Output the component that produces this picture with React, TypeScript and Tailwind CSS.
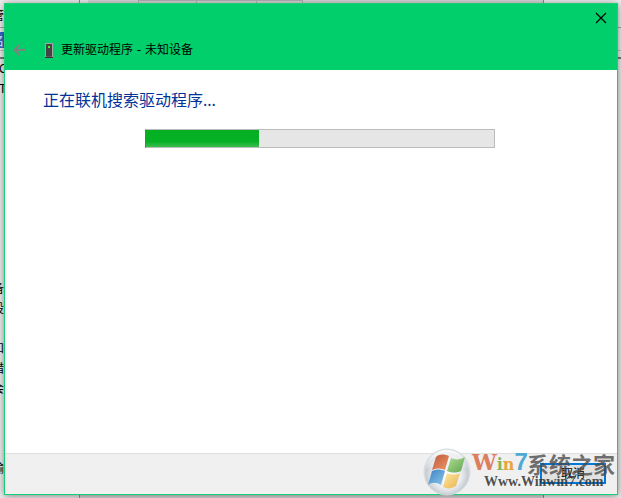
import React from "react";

const sans = "font-['DejaVu_Sans','Noto_Sans_CJK_SC',sans-serif]";

function Desktop() {
  return (
    <div aria-hidden="true" className="absolute inset-0 overflow-hidden bg-[#eeeeee]">
      <div className="absolute inset-y-0 left-[79px] w-[465px] border-x border-[#8f8f8f] bg-[#d9d9d9]" />
      <div className="absolute top-0 left-[80px] h-3 w-2 bg-[#eeeeee]" />
      <div className="absolute top-0 left-[138px] flex h-3 w-[165px] border border-[#b5b5b5]">
        <span className="w-[58px] border-r border-[#b5b5b5]" />
        <span className="w-[60px] border-r border-[#b5b5b5]" />
      </div>
      <div className="absolute inset-x-0 top-[27px] h-px bg-[#a0a0a0]" />
      <div className="absolute inset-x-0 top-[50px] h-px bg-[#c4c4c4]" />
      <div className="absolute inset-x-0 top-[57px] h-[2px] bg-[#777777]" />
      <div className="absolute top-[32px] left-0 h-4 w-4 bg-[#3569c8]" />
      <div className="absolute top-[6px] -left-[8px] w-4 font-['Liberation_Sans','Noto_Sans_CJK_SC',sans-serif] text-[12px] leading-5 text-black">
        <p className="h-[26px]">管</p>
        <p className="h-[27px] text-white">名</p>
        <p className="h-5 pl-[7px]">C</p>
        <p className="h-[200px] pl-[7px]">T</p>
        <p className="h-5">备</p>
        <p className="h-10">设</p>
        <p className="h-5">和</p>
        <p className="h-5">措</p>
        <p className="h-20">会</p>
        <p className="h-5">输</p>
      </div>
    </div>
  );
}

function DeviceIcon() {
  return (
    <svg width="8" height="15" viewBox="0 0 8 15" shapeRendering="crispEdges" aria-hidden="true">
      <rect x="0" y="0" width="8" height="14" fill="#a3a8a5" />
      <rect x="1" y="1" width="6" height="12" fill="#434343" />
      <rect x="3" y="3" width="2" height="2" fill="#39ff20" />
      <rect x="0" y="14" width="8" height="1" fill="#343434" />
      <rect x="1" y="13" width="6" height="1" fill="#5b5b5b" />
    </svg>
  );
}

function FlagGlobe() {
  return (
    <svg width="50" height="48" viewBox="0 0 50 48" aria-hidden="true" className="shrink-0">
      <defs>
        <radialGradient id="globe" cx="50%" cy="55%" r="52%">
          <stop offset="0" stopColor="#ffffff" />
          <stop offset=".6" stopColor="#e9edf0" />
          <stop offset=".88" stopColor="#c6ccd2" />
          <stop offset="1" stopColor="#e4e7ea" />
        </radialGradient>
        <linearGradient id="shine" x2="0" y2="1">
          <stop stopColor="#fff" stopOpacity=".85" />
          <stop offset="1" stopColor="#fff" stopOpacity=".2" />
        </linearGradient>
        <linearGradient id="red" x2="1" y2="1"><stop stopColor="#bd573b" /><stop offset="1" stopColor="#ee9867" /></linearGradient>
        <linearGradient id="green" x2="1" y2="1"><stop stopColor="#b4dc96" /><stop offset="1" stopColor="#5ea650" /></linearGradient>
        <linearGradient id="blue" x2="1" y2="1"><stop stopColor="#3c80c4" /><stop offset="1" stopColor="#8cc8ea" /></linearGradient>
        <linearGradient id="gold" x2="1" y2="1"><stop stopColor="#ffe8a0" /><stop offset="1" stopColor="#e8b350" /></linearGradient>
      </defs>
      <circle cx="25" cy="24" r="23" fill="url(#globe)" stroke="#d5dadd" />
      <path d="M4 20C7 8 16 2 25 2s18 6 20 18C32 17 17 18 4 20Z" fill="url(#shine)" />
      <path d="M14 9c4-3 7-3 13-1l-4 14c-5-2-9-2-13 0Z" fill="url(#red)" />
      <path d="M29 10c5 2 9 2 14-1l-4 14c-5 2-9 2-14 0Z" fill="url(#green)" />
      <path d="M10 23c4-2 8-2 13 0l-4 14c-5-3-9-3-13 0Z" fill="url(#blue)" />
      <path d="M25 25c5 2 9 2 13 0l-4 13c-5 3-9 3-13 1Z" fill="url(#gold)" />
    </svg>
  );
}

function Watermark() {
  return (
    <div className="pointer-events-none absolute right-[2px] bottom-[2px] flex h-12 w-[197px] items-start whitespace-nowrap">
      <FlagGlobe />
      <div className="relative h-12 flex-1 font-['DejaVu_Serif',serif] font-bold">
        <div className="absolute top-[2px] left-0 flex h-6 items-baseline leading-6">
          <span className="text-[22px] text-[#dc7d5e]">W</span>
          <span className="text-[16px] text-[#88b45c]">i</span>
          <span className="text-[16px] text-[#e6a63a]">n</span>
          <span className="font-['Liberation_Sans',sans-serif] text-[24px] text-[#4ea9d5]">7</span>
        </div>
        <span className="absolute top-[3px] left-[55px] font-['Noto_Sans_CJK_SC',sans-serif] text-[22px] leading-6 text-[#4a4a4a]/80">系统之家</span>
        <span className="absolute top-[26px] left-[12px] font-['Liberation_Serif',serif] text-[14px] leading-4 text-[#303030]/85">Www.Winwin7.com</span>
      </div>
    </div>
  );
}

export default function App() {
  return (
    <div className={`relative isolate flex h-screen min-h-60 p-[3px] pl-1 ${sans}`}>
      <Desktop />
      <main className="relative flex min-w-0 flex-1 flex-col border border-[#16cf76] bg-white shadow-[0_1px_8px_rgba(0,0,0,0.45)]">
        <header className="flex h-[66px] shrink-0 flex-col bg-[#00cf6b]">
          <div className="flex h-7 items-center justify-end pr-2">
            <button type="button" aria-label="关闭" className="flex size-4 items-center justify-center">
              <svg width="12" height="12" viewBox="0 0 12 12" stroke="#000000" strokeWidth="1.2" aria-hidden="true">
                <path d="M1 1l10 10M11 1L1 11" />
              </svg>
            </button>
          </div>
          <div className="flex h-9 items-center pl-2">
            <button type="button" aria-label="返回" disabled className="w-8">
              <svg width="13" height="12" viewBox="0 0 13 12" fill="none" stroke="#7c837f" strokeWidth="2" aria-hidden="true">
                <path d="M12.5 6H1.5M6.5 1l-5 5 5 5" />
              </svg>
            </button>
            <DeviceIcon />
            <h1 className="pl-2 text-[12px] leading-4 text-black">更新驱动程序 - 未知设备</h1>
          </div>
        </header>
        <section className="flex flex-1 flex-col pt-5 pr-5 pl-[38px]">
          <h2 className="font-['Noto_Sans','Noto_Sans_CJK_SC',sans-serif] text-[16px] leading-5 text-[#003399]">正在联机搜索驱动程序...</h2>
          <div role="progressbar" aria-label="搜索进度" className="mx-auto mt-[19px] h-[19px] w-full max-w-[350px] border border-[#bcbcbc] border-l-[#06b025] bg-[#e6e6e6]">
            <div className="h-full w-[113px] bg-linear-to-b from-[#06b025] from-70% to-[#36be4f]" />
          </div>
        </section>
        <footer className="flex h-[41px] shrink-0 items-start justify-end border-t border-[#dfdfdf] bg-[#f0f0f0] pt-[9px] pr-[11px]">
          <button type="button" className="h-[21px] w-[66px] border-2 border-[#0078d7] bg-[#e1e1e1] text-[12px] leading-4 text-black">取消</button>
        </footer>
      </main>
      <Watermark />
    </div>
  );
}
